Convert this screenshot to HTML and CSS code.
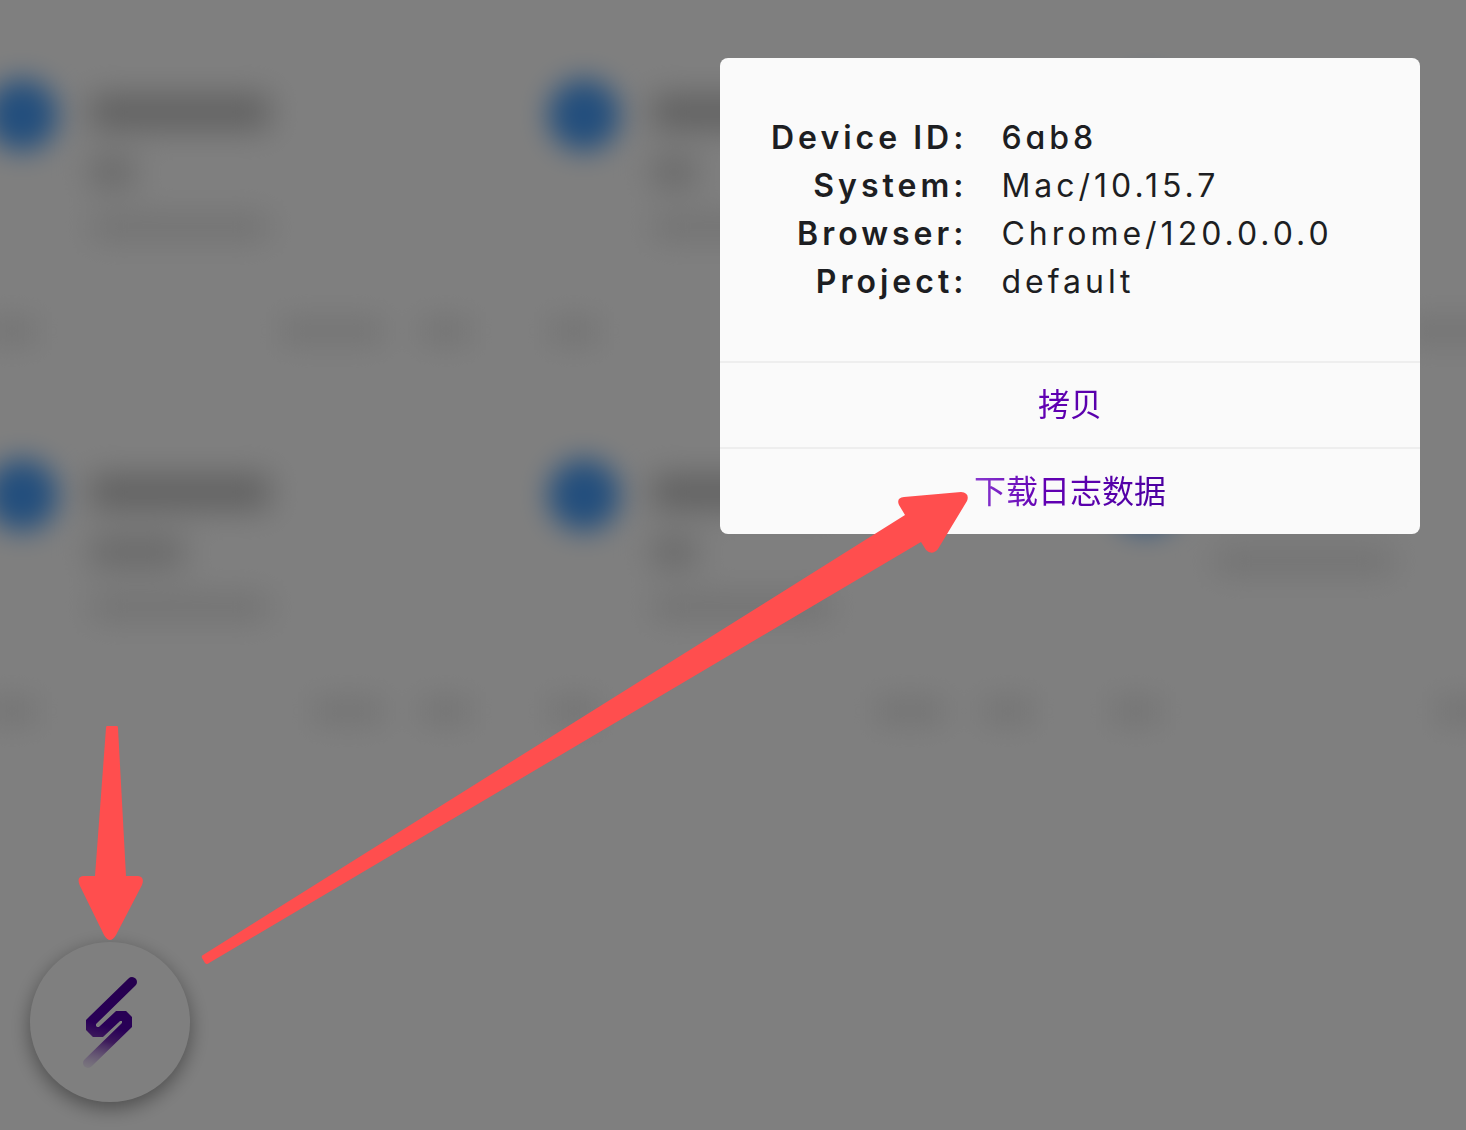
FILE: index.html
```html
<!DOCTYPE html>
<html lang="zh-CN">
<head>
<meta charset="utf-8">
<meta name="viewport" content="width=device-width, initial-scale=1">
<title>PageSpy</title>
<link rel="stylesheet" href="styles.css">
</head>
<body>
<main class="list" aria-hidden="true">
  <div class="cards">
    <article class="card">
      <i class="avatar"></i>
      <div class="lines"><i class="line title"></i><i class="line short"></i><i class="line sub"></i></div>
      <footer class="foot"><i class="chip"></i><i class="chip wide push"></i><i class="chip"></i></footer>
    </article>
    <article class="card">
      <i class="avatar"></i>
      <div class="lines"><i class="line title"></i><i class="line short"></i><i class="line sub"></i></div>
      <footer class="foot"><i class="chip"></i><i class="chip push"></i><i class="chip"></i></footer>
    </article>
    <article class="card">
      <i class="avatar"></i>
      <div class="lines"><i class="line title"></i><i class="line sub"></i></div>
      <footer class="foot"><i class="chip"></i><i class="chip wide push"></i><i class="chip"></i></footer>
    </article>
    <article class="card">
      <i class="avatar"></i>
      <div class="lines"><i class="line title"></i><i class="line medium"></i><i class="line sub"></i></div>
      <footer class="foot"><i class="chip"></i><i class="chip mid push"></i><i class="chip"></i></footer>
    </article>
    <article class="card">
      <i class="avatar"></i>
      <div class="lines"><i class="line title"></i><i class="line short"></i><i class="line sub"></i></div>
      <footer class="foot"><i class="chip"></i><i class="chip mid push"></i><i class="chip"></i></footer>
    </article>
    <article class="card">
      <i class="avatar"></i>
      <div class="lines single"><i class="line title"></i><i class="line sub"></i></div>
      <footer class="foot"><i class="chip"></i><i class="chip mid push"></i><i class="chip"></i></footer>
    </article>
  </div>
</main>

<button class="float" type="button" aria-label="PageSpy">
  <svg viewBox="0 0 160 160" aria-hidden="true">
    <defs>
      <linearGradient id="bolt" gradientUnits="userSpaceOnUse" x1="80" y1="36" x2="56" y2="127">
        <stop offset="0" stop-color="#4c009e"/>
        <stop offset=".5" stop-color="#5200ae"/>
        <stop offset=".66" stop-color="#7c36b8"/>
        <stop offset="1" stop-color="#c9a6ee" stop-opacity=".15"/>
      </linearGradient>
    </defs>
    <path d="M102 40 61 80V86L65 90H71L88 74H94L97 77V83L58 121" fill="none" stroke="url(#bolt)" stroke-width="10" stroke-linecap="round"/>
  </svg>
</button>

<div class="overlay">
  <section class="dialog" role="dialog" aria-label="Device ID">
    <div class="info">
      <table>
        <tr><th scope="row">Device ID:</th><td class="device">6ab8</td></tr>
        <tr><th scope="row">System:</th><td>Mac/10.15.7</td></tr>
        <tr><th scope="row">Browser:</th><td>Chrome/120.0.0.0</td></tr>
        <tr><th scope="row">Project:</th><td>default</td></tr>
      </table>
    </div>
    <button class="action" type="button"><span>拷贝</span></button>
    <button class="action" type="button"><span>下载日志数据</span></button>
  </section>
</div>

<svg class="arrows" viewBox="0 0 1466 1130" aria-hidden="true">
  <path d="M107 726H117Q118 726 118 728L126 876H138Q145 877 142 885L116 935Q110 945 104 935L80 886Q76 877 83 876H95L106 728Q106 726 107 726Z"/>
  <path d="M203 955 905 515 899 505Q896 498 904 497L961 492Q970 493 967 501L938 549Q932 556 926 550L921 542 209 963Q207 965 205 963L202 958Q201 956 203 955Z"/>
</svg>
</body>
</html>
```
FILE: styles.css
```css
* {
  box-sizing: border-box;
}

body {
  margin: 0;
  min-height: 100vh;
  position: relative;
  background: #fff;
  color: #1d1e22;
  font-family: Inter, "Noto Sans CJK SC", sans-serif;
  font-size: 32px;
}

/* Blurred list behind the mask */
.list {
  overflow: hidden;
}

.cards {
  display: grid;
  grid-template-columns: repeat(3, 1fr);
  column-gap: 76px;
  margin: 0 -130px 0 -14px;
  padding-top: 60px;
}

.card {
  display: grid;
  grid-template-columns: 72px 1fr;
  grid-template-rows: 236px 48px;
  column-gap: 32px;
  height: 380px;
  padding-top: 19px;
}

.avatar {
  height: 72px;
  border-radius: 50%;
  background: #469dfa;
  filter: blur(14px);
}

.lines {
  display: flex;
  flex-direction: column;
  gap: 28px;
  padding-top: 16px;
  filter: blur(16px);
}

.single {
  gap: 40px;
}

.line {
  height: 30px;
  background: #e2e2e2;
}

.title {
  width: 180px;
  height: 34px;
  background: #c0c0c0;
}

.short {
  width: 44px;
  background: #d0d0d0;
}

.medium {
  width: 94px;
  background: #d0d0d0;
}

.sub {
  width: 180px;
  height: 24px;
}

.foot {
  grid-column: 1 / -1;
  display: flex;
  gap: 36px;
  align-items: flex-start;
  filter: blur(14px);
}

.chip {
  width: 52px;
  height: 32px;
  background: #ececec;
}

.mid {
  width: 72px;
}

.wide {
  width: 104px;
}

.push {
  margin-left: auto;
}

/* Floating launcher */
.float {
  position: absolute;
  left: 30px;
  bottom: 28px;
  width: 160px;
  height: 160px;
  padding: 0;
  border: 0;
  border-radius: 50%;
  background: #fff;
  box-shadow: 0 6px 20px rgba(0, 0, 0, .4);
}

.float svg {
  display: block;
}

/* Mask and dialog */
.overlay {
  position: absolute;
  inset: 0;
  display: flex;
  justify-content: flex-end;
  align-items: flex-start;
  padding: 58px 46px;
  background: rgba(0, 0, 0, .5);
}

.dialog {
  width: 700px;
  max-width: 100%;
  overflow: hidden;
  border-radius: 8px;
  background: #fafafa;
}

.info {
  padding: 56px 51px 55px;
}

table {
  border-collapse: collapse;
  line-height: 48px;
  letter-spacing: 4px;
}

th,
td {
  padding: 0;
}

th {
  padding-right: 34px;
  font-weight: 600;
  text-align: right;
}

.device {
  font-weight: 500;
  font-feature-settings: "cv11";
}

.action {
  display: block;
  width: 100%;
  height: 86px;
  padding: 0;
  border: 0;
  border-top: 2px solid #eee;
  background: none;
  font: inherit;
  line-height: 48px;
}

.action:last-child {
  height: 87px;
}

.action span {
  display: block;
  color: transparent;
  background: linear-gradient(90deg, #8a3ad0 36%, #6200b3 46%, #4a00a0 65%);
  background-clip: text;
  -webkit-background-clip: text;
}

/* Pointer annotations */
.arrows {
  position: absolute;
  left: 0;
  top: 0;
  width: 1466px;
  height: 1130px;
  fill: #ff4e4e;
  pointer-events: none;
}
```
